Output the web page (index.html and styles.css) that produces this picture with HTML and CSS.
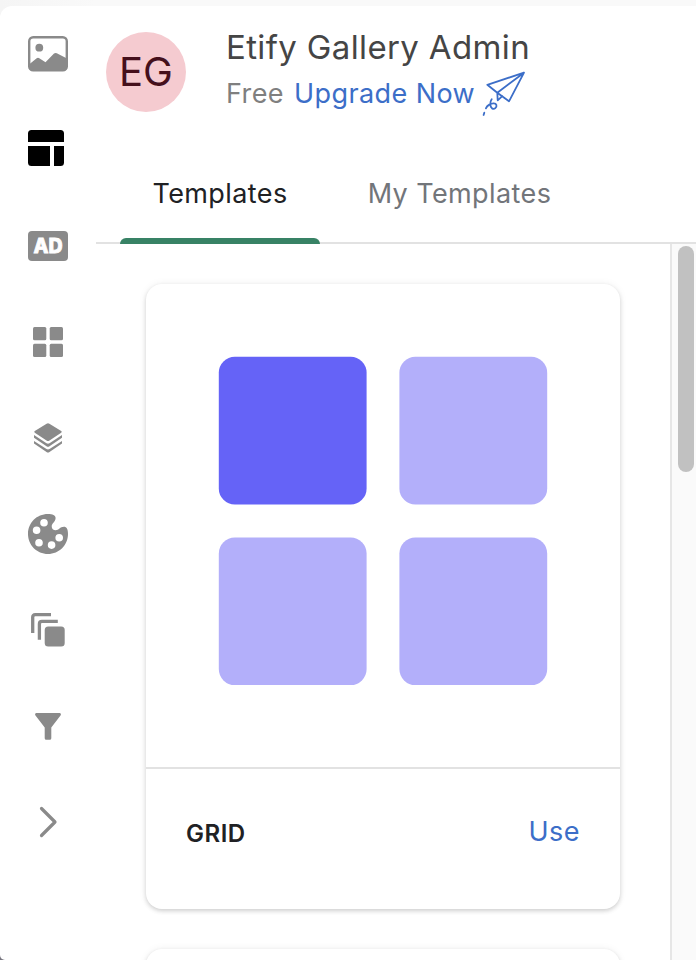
FILE: index.html
```html
<!DOCTYPE html>
<html lang="en">
<head>
<meta charset="utf-8">
<title>Etify Gallery Admin</title>
<link rel="stylesheet" href="styles.css">
</head>
<body>
<div class="window">
  <nav class="rail">
    <a class="rail-item"><svg width="40" height="36" viewBox="0 0 40 36"><rect x="1.2" y="1.2" width="37.6" height="33.2" rx="4" fill="none" stroke="currentColor" stroke-width="2.4"/><circle cx="11.3" cy="11.7" r="3.9" fill="currentColor"/><path d="M1 28.5 8.700 22.300Q10 21.300 11.300 22.300L17.500 26.300 26 17.600Q27.300 16.400 28.800 17.200L39 22.500V31a4 4 0 0 1-4 4H5a4 4 0 0 1-4-4Z" fill="currentColor"/></svg></a>
    <a class="rail-item active"><svg width="36" height="36" viewBox="0 0 36 36" fill="currentColor"><path d="M0 12V3.500A3.500 3.500 0 0 1 3.500 0h29A3.500 3.500 0 0 1 36 3.500V12Z"/><path d="M0 16h22v20H3.500A3.500 3.500 0 0 1 0 32.500Z"/><path d="M26 16h10v16.500A3.500 3.500 0 0 1 32.500 36H26Z"/></svg></a>
    <a class="rail-item"><span class="ad">AD</span></a>
    <a class="rail-item"><svg width="30" height="30" viewBox="0 0 30 30" fill="currentColor"><rect width="13.300" height="13.300" rx="1.500"/><rect x="16.700" width="13.300" height="13.300" rx="1.500"/><rect y="16.700" width="13.300" height="13.300" rx="1.500"/><rect x="16.700" y="16.700" width="13.300" height="13.300" rx="1.500"/></svg></a>
    <a class="rail-item"><svg width="28" height="30" viewBox="0 0 28 30" fill="currentColor"><path d="M12.600.7Q14-.1 15.400.7L27.200 8Q28.400 8.800 27.200 9.800L15.500 17.500Q14 18.500 12.500 17.500L.8 9.800Q-.4 8.800.8 8Z"/><path d="M0 12.100 12.500 20.200Q14 21.100 15.500 20.200L28 12.100V14.800L15.500 23.200Q14 24.200 12.500 23.200L0 14.800Z"/><path d="M0 17.900 12.500 26Q14 26.900 15.500 26L28 17.900V20.600L15.500 29Q14 30 12.500 29L0 20.600Z"/></svg></a>
    <a class="rail-item"><svg width="40" height="40" viewBox="0 0 40 40"><path fill="currentColor" fill-rule="evenodd" d="M20 0C8.700 0 0 8.800 0 20s8.800 20 20 20 20-8.800 20-20c0-4.800-1.400-7.200-4-7.200-4 0-5.300 3.500-8.300 3.500-2.400 0-4-1.600-4-4 0-3.200 3.900-4.500 3.900-8.300C27.600 1.100 24.500 0 20 0ZM16 5a3.800 3.800 0 1 0 0 7.600A3.800 3.800 0 0 0 16 5ZM8.600 12.400a3.800 3.800 0 1 0 0 7.600 3.800 3.800 0 0 0 0-7.600ZM31.200 20a3.800 3.800 0 1 0 0 7.600 3.800 3.800 0 0 0 0-7.600ZM11 25a3.800 3.800 0 1 0 0 7.600A3.800 3.800 0 0 0 11 25ZM23.600 27.300a3.800 3.800 0 1 0 0 7.600 3.800 3.800 0 0 0 0-7.600Z"/></svg></a>
    <a class="rail-item"><svg width="34" height="34" viewBox="0 0 34 34"><path d="M1.700 20V4.200Q1.700 1.700 4.200 1.700H20M8.400 26.800V10.900Q8.400 8.400 10.900 8.400H26.800" fill="none" stroke="currentColor" stroke-width="3.300"/><rect x="13.700" y="13.400" width="20" height="20" rx="3.500" fill="currentColor"/></svg></a>
    <a class="rail-item"><svg width="26" height="27" viewBox="0 0 26 27"><path d="M1 0H25Q26.600.8 25.700 2.200L16.300 14.500V25.200Q16.300 26.800 14.700 26.800H11.300Q9.700 26.800 9.700 25.200V14.500L.3 2.200Q-.6.8 1 0Z" fill="currentColor"/></svg></a>
    <a class="rail-item"><svg width="17" height="30" viewBox="0 0 17 30"><path d="M1.500 1.500 15 15 1.500 28.500" fill="none" stroke="currentColor" stroke-width="3.200" stroke-linecap="round" stroke-linejoin="round"/></svg></a>
  </nav>
  <main class="panel">
    <header class="account">
      <div class="avatar">EG</div>
      <div class="account-text">
        <div class="account-name">Etify Gallery Admin</div>
        <div class="plan"><span class="plan-name">Free</span><a class="upgrade">Upgrade Now</a>
          <svg class="plane" width="44" height="46" viewBox="0 0 44 46" fill="none" stroke="currentColor" stroke-width="1.800" stroke-linejoin="round" stroke-linecap="round"><path d="M42 1.700 5.300 13.800 15.300 21.700 27 30.300ZM42 1.700 15.300 21.700 15.700 29.300 20.300 25.200"/><path d="M9.700 28.200C8 30.500 7.600 35.500 10 37.400 12.500 38.700 15 36.500 14.400 34 13.500 31.200 9.500 32.400 7.300 33.600 5.500 34.600 4.500 35.800 3.900 37.300M2.300 41.700 1.600 44"/></svg>
        </div>
      </div>
    </header>
    <div class="tabs"><a class="tab selected">Templates</a><a class="tab">My Templates</a></div>
    <div class="body">
      <div class="cards">
        <article class="card">
          <div class="preview"><svg width="329" height="329" viewBox="0 0 329 329" fill="#b3affa"><rect x="-.2" y="-.2" width="147.800" height="147.600" rx="16" fill="#6563f7"/><rect x="180.400" y="-.2" width="147.800" height="147.600" rx="16"/><rect x="-.2" y="180.500" width="147.800" height="147.600" rx="16"/><rect x="180.400" y="180.500" width="147.800" height="147.600" rx="16"/></svg></div>
          <footer class="card-foot"><strong class="card-name">GRID</strong><a class="use">Use</a></footer>
        </article>
        <article class="card"></article>
      </div>
      <div class="scrollbar"><div class="thumb"></div></div>
    </div>
  </main>
</div>
</body>
</html>
```

FILE: styles.css
```css
* { box-sizing: border-box; }
body {
  margin: 0;
  height: 960px;
  overflow: hidden;
  padding-top: 6px;
  background:
    linear-gradient(#77757f, #77757f) left bottom / 6px 6px no-repeat,
    linear-gradient(90deg, #f5f5f5, #f9f9f9 96px);
  font-family: Inter, "Liberation Sans", sans-serif;
}
.window {
  display: flex;
  height: 954px;
  background: #fff;
  border-radius: 12px 0 0 5px;
  overflow: hidden;
}
.rail { width: 96px; flex: none; color: #8a8a8a; }
.rail-item { display: flex; height: 96px; align-items: center; justify-content: center; }
.rail-item svg { display: block; overflow: visible; }
.rail-item.active { color: #000; padding: 0 4px 4px 0; }
.ad {
  width: 40px;
  height: 30px;
  border-radius: 4px;
  background: #8a8a8a;
  color: #fff;
  font-size: 19.5px;
  font-weight: 800;
  line-height: 30px;
  text-align: center;
  -webkit-text-stroke: 0.8px #fff;
}
.panel { flex: 1; min-width: 0; display: flex; flex-direction: column; }
.account { display: flex; height: 140px; padding: 26px 0 0 10px; flex: none; }
.avatar {
  width: 80px;
  height: 80px;
  border-radius: 50%;
  background: #f5cbd0;
  color: #45101c;
  font-size: 40px;
  line-height: 80px;
  text-align: center;
  flex: none;
}
.account-text { margin-left: 40px; white-space: nowrap; }
.account-name { height: 39px; line-height: 30px; font-size: 33px; letter-spacing: 0.36px; color: #454545; }
.plan { display: flex; height: 44px; line-height: 45px; font-size: 27px; letter-spacing: 0.42px; }
.plan-name { color: #7f7f7f; width: 68px; }
.upgrade { color: #3c6ec8; width: 188px; }
.plane { display: block; color: #3c6ec8; overflow: visible; }
.tabs { display: flex; height: 98px; border-bottom: 2px solid #e2e2e2; padding-left: 24px; flex: none; }
.tab {
  display: flex;
  justify-content: center;
  width: 247px;
  height: 98px;
  line-height: 96px;
  font-size: 27px;
  letter-spacing: 0.4px;
  color: #72757a;
  margin-left: 16px;
}
.tab.selected { width: 200px; margin-left: 0; color: #202124; position: relative; }
.tab.selected::after {
  content: "";
  position: absolute;
  left: 0;
  right: 0;
  bottom: 0;
  height: 6px;
  border-radius: 6px 6px 0 0;
  background: #388265;
}
.body { flex: 1; min-height: 0; display: flex; overflow: hidden; }
.cards { width: 574px; padding: 40px 50px 0; flex: none; }
.card {
  height: 625px;
  margin-bottom: 40px;
  border-radius: 16px;
  background: #fff;
  box-shadow: 0 2px 4px rgba(0, 0, 0, 0.16), 0 0 8px rgba(0, 0, 0, 0.06);
}
.preview { height: 485px; padding: 73px; border-bottom: 2px solid #e2e2e2; }
.preview svg { display: block; overflow: visible; }
.card-foot { display: flex; height: 128px; align-items: center; justify-content: space-between; padding: 0 40px; }
.card-name { font-size: 24px; font-weight: 600; letter-spacing: 0.5px; color: #202124; }
.use { font-size: 27px; line-height: 32px; padding-bottom: 2px; letter-spacing: 0.45px; color: #3c6ec8; }
.scrollbar { width: 26px; border-left: 2px solid #e6e6e6; background: #fafafa; padding: 2px 2px 0 6px; }
.thumb { height: 226px; border-radius: 8px; background: #c1c1c1; }
```
